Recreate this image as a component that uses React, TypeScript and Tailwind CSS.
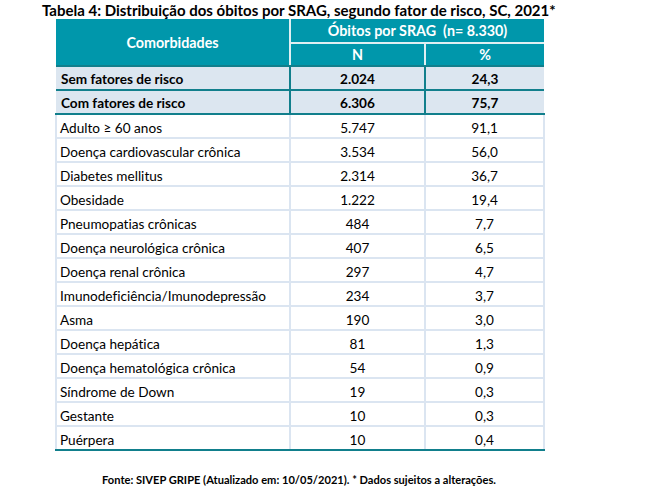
const rows = [
  { name: 'Adulto ≥ 60 anos', n: '5.747', pct: '91,1' },
  { name: 'Doença cardiovascular crônica', n: '3.534', pct: '56,0' },
  { name: 'Diabetes mellitus', n: '2.314', pct: '36,7' },
  { name: 'Obesidade', n: '1.222', pct: '19,4' },
  { name: 'Pneumopatias crônicas', n: '484', pct: '7,7' },
  { name: 'Doença neurológica crônica', n: '407', pct: '6,5' },
  { name: 'Doença renal crônica', n: '297', pct: '4,7' },
  { name: 'Imunodeficiência/Imunodepressão', n: '234', pct: '3,7' },
  { name: 'Asma', n: '190', pct: '3,0' },
  { name: 'Doença hepática', n: '81', pct: '1,3' },
  { name: 'Doença hematológica crônica', n: '54', pct: '0,9' },
  { name: 'Síndrome de Down', n: '19', pct: '0,3' },
  { name: 'Gestante', n: '10', pct: '0,3' },
  { name: 'Puérpera', n: '10', pct: '0,4' },
]

const totals = [
  { name: 'Sem fatores de risco', n: '2.024', pct: '24,3' },
  { name: 'Com fatores de risco', n: '6.306', pct: '75,7' },
]

export default function App() {
  return (
    <div
      className="min-h-screen bg-white pl-[42px] pt-[1px] text-black [font-variant-ligatures:none]"
      style={{ fontFamily: 'Lato, "Noto Sans", sans-serif' }}
    >
      {/* Title */}
      <h1 className="h-[18px] text-[15px] font-bold leading-[18px] whitespace-nowrap">
        Tabela 4: Distribuição dos óbitos por SRAG, segundo fator de risco, SC, 2021*
      </h1>

      <div className="ml-[13px] w-[488px]">
        <table className="w-full table-fixed border-collapse text-[13.6px] leading-[16px]">
          <colgroup>
            <col className="w-[234px]" />
            <col className="w-[135px]" />
            <col className="w-[119px]" />
          </colgroup>
          <thead className="bg-[#0097ab] font-bold text-white">
            <tr className="h-[24px]">
              <th rowSpan={2} className="border-r-2 border-b-2 border-r-[#dfeff2] border-b-[#117f8c] pt-[2px] text-center text-[14.3px] font-bold">
                Comorbidades
              </th>
              <th colSpan={2} className="border-b-2 border-[#dfeff2] pt-[1px] text-center text-[14.3px] font-bold">
                Óbitos por SRAG&nbsp; (n= 8.330)
              </th>
            </tr>
            <tr className="h-[23px]">
              <th className="border-r-2 border-b-2 border-r-[#dfeff2] border-b-[#117f8c] pt-[1px] text-center text-[14.3px] font-bold">N</th>
              <th className="border-b-2 border-[#117f8c] pt-[1px] text-center text-[14.3px] font-bold">%</th>
            </tr>
          </thead>
          <tbody>
            {totals.map((r) => (
              <tr key={r.name} className="h-[24px] bg-[#dce6f0] font-bold">
                <td className="border-b-2 border-r-2 border-[#117f8c] pl-[5px] pt-[2px]">{r.name}</td>
                <td className="border-b-2 border-r-2 border-[#117f8c] pt-[2px] text-center">{r.n}</td>
                <td className="border-b-2 border-[#117f8c] pt-[2px] text-center">{r.pct}</td>
              </tr>
            ))}
            {rows.map((r, i) => {
              const last = i === rows.length - 1
              const bottom = last ? 'border-b-2 border-b-[#117f8c]' : 'border-b-2 border-b-[#dbe5f1]'
              return (
                <tr key={r.name} className="h-[24px]">
                  <td className={`border-l-2 border-r-2 border-l-[#dbe5f1] border-r-[#dbe5f1] pl-[3px] pt-[4px] ${bottom}`}>{r.name}</td>
                  <td className={`border-r-2 border-r-[#dbe5f1] pt-[4px] text-center ${bottom}`}>{r.n}</td>
                  <td className={`border-r-2 border-r-[#dbe5f1] pt-[4px] text-center ${bottom}`}>{r.pct}</td>
                </tr>
              )
            })}
          </tbody>
        </table>

        {/* Source note */}
        <p className="mt-[21px] text-center text-[11.1px] font-bold whitespace-nowrap">
          Fonte: SIVEP GRIPE (Atualizado em: 10/05/2021). * Dados sujeitos a alterações.
        </p>
      </div>
    </div>
  )
}
